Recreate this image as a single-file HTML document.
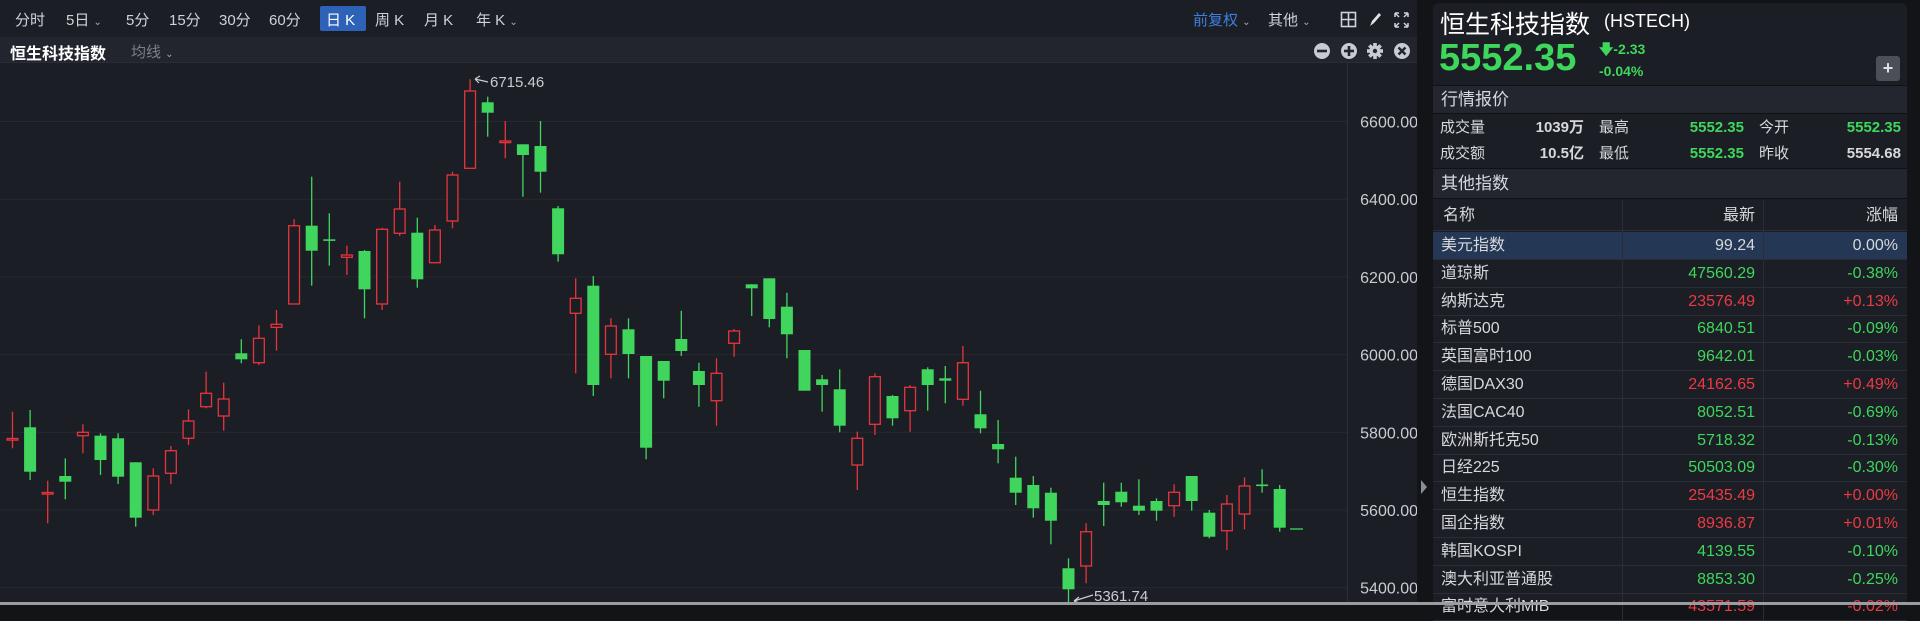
<!DOCTYPE html>
<html><head><meta charset="utf-8">
<style>
*{margin:0;padding:0;box-sizing:border-box}
body{width:1920px;height:605px;background:#121418;font-family:"Liberation Sans","Noto Sans CJK SC",sans-serif;overflow:hidden;position:relative;color:#d6d8dc}
.abs{position:absolute;white-space:nowrap}
#chartp{position:absolute;left:0;top:0;width:1417px;height:602px;background:#1b1e25;border-radius:0 6px 0 0}
#tb{position:absolute;left:0;top:0;width:1417px;height:37px;background:#1b1e25}
#row2{position:absolute;left:0;top:37px;width:1417px;height:26px;background:#22252d;border-bottom:1px solid #2a2d35}
.tbi{position:absolute;top:9px;font-size:15px;color:#cfd2d8}
.car{font-size:10px;color:#aab}
#rp{position:absolute;left:1433px;top:3px;width:474px;height:600px;background:#1b1e25;border-radius:6px 6px 0 0}
.bar{position:absolute;left:0;width:474px;background:#23262e;border-top:1px solid #111;border-bottom:1px solid #111;font-size:17px;color:#d6d8dc;padding-left:8px}
.g{color:#3fd65c}.r{color:#ec3a43}
.trow{position:absolute;left:0;width:474px;height:28px;border-bottom:1px solid #2a2d35;font-size:16px}
.trow span{position:absolute;top:0;line-height:27px;height:27px}
.q span{position:absolute;line-height:20px;height:20px}
</style></head><body>
<div id="chartp"></div>
<div id="tb">
<span class="tbi" style="left:15px">分时</span>
<span class="tbi" style="left:66px">5日 <span class="car">⌄</span></span>
<span class="tbi" style="left:126px">5分</span>
<span class="tbi" style="left:169px">15分</span>
<span class="tbi" style="left:219px">30分</span>
<span class="tbi" style="left:269px">60分</span>
<span class="abs" style="left:320px;top:6px;width:46px;height:25px;background:#2d62b8;border-radius:2px"></span>
<span class="tbi" style="left:326px;color:#fff">日 K</span>
<span class="tbi" style="left:375px">周 K</span>
<span class="tbi" style="left:424px">月 K</span>
<span class="tbi" style="left:476px">年 K <span class="car">⌄</span></span>
<span class="tbi" style="left:1193px;color:#3d7fe0">前复权 <span class="car">⌄</span></span>
<span class="tbi" style="left:1268px">其他 <span class="car">⌄</span></span>
<svg class="abs" style="left:1340px;top:11px" width="72" height="18" viewBox="0 0 72 18">
<rect x="1.5" y="1.5" width="14" height="14" fill="none" stroke="#cfd2d8" stroke-width="1.6"/><path d="M8.5 1.5v14M1.5 8.5h14" stroke="#cfd2d8" stroke-width="1.6"/>
<path d="M30 15l2-5 7-8 2 2-7 8z" fill="#e0e2e6"/>
<path d="M55 2h4M55 2v4M55 2l4 4M68 2h-4M68 2v4M68 2l-4 4M55 16h4M55 16v-4M55 16l4-4M68 16h-4M68 16v-4M68 16l-4-4" stroke="#cfd2d8" stroke-width="1.5"/>
</svg>
</div>
<div id="row2">
<span class="abs" style="left:10px;top:3px;font-size:16px;font-weight:bold;color:#fff">恒生科技指数</span>
<span class="abs" style="left:131px;top:4px;font-size:15px;color:#7c808a">均线 <span class="car">⌄</span></span>
<svg class="abs" style="left:1313px;top:5px" width="100" height="18" viewBox="0 0 100 18">
<circle cx="9" cy="9" r="8" fill="#c8cbd0"/><rect x="4" y="7.7" width="10" height="2.6" fill="#22252d"/>
<circle cx="36" cy="9" r="8" fill="#c8cbd0"/><rect x="31" y="7.7" width="10" height="2.6" fill="#22252d"/><rect x="34.7" y="4" width="2.6" height="10" fill="#22252d"/>
<g transform="translate(62,9)" fill="#c8cbd0"><circle r="5.5"/><g id="t"><rect x="-1.8" y="-8" width="3.6" height="16"/></g><use href="#t" transform="rotate(45)"/><use href="#t" transform="rotate(90)"/><use href="#t" transform="rotate(135)"/><circle r="2.2" fill="#22252d"/></g>
<circle cx="89" cy="9" r="8" fill="#c8cbd0"/><path d="M85.5 5.5l7 7M92.5 5.5l-7 7" stroke="#22252d" stroke-width="2.4"/>
</svg>
</div>
<svg id="chart" class="abs" style="left:0;top:63px" width="1417" height="539" viewBox="0 63 1417 539"></svg>
<svg class="abs" style="left:1419px;top:479px" width="10" height="16"><path d="M2 1l6 7-6 7z" fill="#8a8e96"/></svg>

<div id="rp">
<span class="abs" style="left:7px;top:2px;font-size:25px;color:#fff">恒生科技指数</span>
<span class="abs" style="left:171px;top:8px;font-size:18px;color:#fff">(HSTECH)</span>
<span class="abs g" style="left:6px;top:34px;font-size:38px;font-weight:bold">5552.35</span>
<span class="abs g" style="left:166px;top:36px;font-size:14px;font-weight:bold">🡇-2.33</span>
<span class="abs g" style="left:166px;top:60px;font-size:14px;font-weight:bold">-0.04%</span>
<span class="abs" style="left:443px;top:53px;width:24px;height:25px;background:#4a4f58;border-radius:3px;color:#dfe1e5;font-size:18px;font-weight:bold;text-align:center;line-height:25px">+</span>
<div class="bar" style="top:82px;height:29px;line-height:27px">行情报价</div>
<div class="q" style="position:absolute;top:112px;left:0;width:474px;height:54px;font-size:15px">
<span style="left:7px;top:3px">成交量</span><span style="right:323px;top:3px;font-weight:bold">1039万</span>
<span style="left:166px;top:3px">最高</span><span class="g" style="right:163px;top:3px;font-weight:bold">5552.35</span>
<span style="left:326px;top:3px">今开</span><span class="g" style="right:6px;top:3px;font-weight:bold">5552.35</span>
<span style="left:7px;top:29px">成交额</span><span style="right:323px;top:29px;font-weight:bold">10.5亿</span>
<span style="left:166px;top:29px">最低</span><span class="g" style="right:163px;top:29px;font-weight:bold">5552.35</span>
<span style="left:326px;top:29px">昨收</span><span style="right:6px;top:29px;font-weight:bold">5554.68</span>
</div>
<div class="bar" style="top:165px;height:31px;line-height:29px">其他指数</div>
<div id="tbl"></div>
</div>
<div class="abs" style="left:0;top:602px;width:1920px;height:3px;background:#9a9ca0"></div>

<script>
var C=[
[1,'r',411.7,448.3,438.5,440],[2,'g',410,480,427.3,471.7],[3,'r',480.7,523.3,492.5,494],[4,'g',458.3,499.3,476,481.7],
[5,'r',424.3,453.3,432.3,435.7],[6,'g',433.3,475,435.7,460],[7,'g',433.3,484,438.3,476.7],[8,'g',462.3,526.7,462.3,517.7],
[9,'r',468.3,515,476,510],[10,'r',446,484,450.7,473.3],[11,'r',409.3,445,421,438.3],[12,'r',371.7,408.3,393.3,406.7],
[13,'r',382.7,430.7,399,416],[14,'g',339.3,363.3,353.3,359.3],[15,'r',325.3,365,338.3,362.7],[16,'r',310,350.7,324.3,327.3],
[17,'r',219.3,304,225.7,304],[18,'g',176.7,285.7,225.7,250.7],[19,'g',213.3,265.7,239.3,240.7],[20,'r',245.7,275,255,257.3],
[21,'g',250,318.3,251,289.3],[22,'r',227.7,310,229.3,304],[23,'r',181.7,236,209,233.3],[24,'g',217.7,287.7,232.7,279.3],
[25,'r',225,263.3,230,262.7],[26,'r',171.7,228.3,175,221],[27,'r',79.3,168.3,91,168.3],[28,'g',96.7,136.7,102.3,112.7],
[29,'r',121,158.3,141,142.5],[30,'g',144.3,196.7,144.3,155],[31,'g',121,192.7,146,171.7],[32,'g',206,261.7,208.3,254.3],
[33,'r',278.3,373.3,298.3,313.3],[34,'g',276,396,285.7,385],[35,'r',318.3,378.3,326,354.3],[36,'g',318.3,378.3,329.3,354],
[37,'g',356,459.3,356,447.7],[38,'g',361,398.3,361,380.7],[39,'g',310.7,356,339,351],[40,'g',362.7,406.7,371,385],
[41,'r',358.3,425.7,373.3,400.7],[42,'r',329,356.7,331,343.3],[43,'g',284.3,316,284.3,288.3],[44,'g',278.3,327.3,278.3,319],
[45,'g',292.7,358.3,306.7,334.3],[46,'g',350,390.7,350,390.7],[47,'g',375,411.7,379.3,385],[48,'g',369.3,432.3,389.3,425.7],
[49,'r',431.7,490,438.3,465],[50,'r',373.3,435,376.7,424.3],[51,'g',395,425.7,396,418.3],[52,'r',385,431.7,387.3,410.7],
[53,'g',367.3,410.7,369.3,385],[54,'g',366,403.3,378.3,380.7],[55,'r',346,405.7,362.7,399.3],[56,'g',390.7,433.3,414.3,428.3],
[57,'g',420,463.3,444,449.3],[58,'g',456.7,505,477.7,492.7],[59,'g',476,517.7,485,508.3],[60,'g',487.7,544.3,492.7,520.7],
[61,'g',558.3,602,568.3,589.3],[62,'r',523.3,583.3,531.7,566],[63,'g',482.7,526,501,505],[64,'g',482.7,506.7,491.7,502.3],
[65,'g',479.3,515,505.7,510.7],[66,'g',498.3,520.7,501,510.7],[67,'r',484.3,516.7,492.3,505.7],[68,'g',476,510.7,476,501],
[69,'g',510,538.3,512.7,536.7],[70,'r',495,550,504,530.7],[71,'r',477.3,529.3,486,514],[72,'g',469.3,492.7,484.5,486],
[73,'g',485,531.7,489,527.7]];
var s='';
var labels=['6600.00','6400.00','6200.00','6000.00','5800.00','5600.00','5400.00'];
for(var i=0;i<7;i++){var y=121.5+i*77.7;s+='<line x1="0" x2="1347" y1="'+y+'" y2="'+y+'" stroke="#252830" stroke-width="1"/>';
s+='<text x="1418" y="'+(y+6)+'" text-anchor="end" font-size="16" fill="#c9ccd1" font-family="Liberation Sans,sans-serif">'+labels[i]+'</text>';}
s+='<line x1="1347.5" x2="1347.5" y1="63" y2="602" stroke="#2c2f37"/>';
C.forEach(function(c){var x=12.5+(c[0]-1)*17.6;var col=c[1]=='g'?'#40d65d':'#e8343c';
s+='<line x1="'+x+'" x2="'+x+'" y1="'+c[2]+'" y2="'+c[3]+'" stroke="'+col+'" stroke-width="1.3"/>';
var h=Math.max(c[5]-c[4],1.6);
if(c[1]=='g')s+='<rect x="'+(x-6)+'" y="'+c[4]+'" width="12" height="'+h+'" fill="'+col+'"/>';
else s+='<rect x="'+(x-5.4)+'" y="'+c[4]+'" width="10.8" height="'+h+'" fill="#1b1e25" stroke="'+col+'" stroke-width="1.3"/>';});
s+='<line x1="1290" x2="1303" y1="529" y2="529" stroke="#40d65d" stroke-width="1.3"/>';
s+='<path d="M488 82L475 79M475 79l5-3M475 79l4 4" stroke="#c9ccd1" stroke-width="1.2" fill="none"/>';
s+='<text x="490" y="87" font-size="15" fill="#c9ccd1" font-family="Liberation Sans,sans-serif">6715.46</text>';
s+='<path d="M1093 595L1074 601M1074 601l5-4M1074 601l5 2" stroke="#c9ccd1" stroke-width="1.2" fill="none"/>';
s+='<text x="1094" y="601" font-size="15" fill="#c9ccd1" font-family="Liberation Sans,sans-serif">5361.74</text>';
document.getElementById('chart').innerHTML=s;
var R=[['美元指数','99.24','0.00%','w'],['道琼斯','47560.29','-0.38%','g'],['纳斯达克','23576.49','+0.13%','r'],['标普500','6840.51','-0.09%','g'],
['英国富时100','9642.01','-0.03%','g'],['德国DAX30','24162.65','+0.49%','r'],['法国CAC40','8052.51','-0.69%','g'],['欧洲斯托克50','5718.32','-0.13%','g'],
['日经225','50503.09','-0.30%','g'],['恒生指数','25435.49','+0.00%','r'],['国企指数','8936.87','+0.01%','r'],['韩国KOSPI','4139.55','-0.10%','g'],
['澳大利亚普通股','8853.30','-0.25%','g'],['富时意大利MIB','43571.59','-0.02%','r']];
var t='<div class="trow" style="top:197px;height:31px;font-size:16px"><span style="left:10px;line-height:31px">名称</span><span style="right:152px;line-height:31px">最新</span><span style="right:9px;line-height:31px">涨幅</span></div>';
R.forEach(function(r,i){var top=229+i*27.8;var cl=r[3]=='w'?'':r[3];
t+='<div class="trow" style="top:'+top+'px;'+(i==0?'background:#243754;':'')+'"><span style="left:8px">'+r[0]+'</span><span class="'+cl+'" style="right:152px">'+r[1]+'</span><span class="'+cl+'" style="right:9px">'+r[2]+'</span></div>';});
t+='<div style="position:absolute;left:189px;top:197px;width:1px;height:420px;background:#2a2d35"></div><div style="position:absolute;left:330px;top:197px;width:1px;height:420px;background:#2a2d35"></div>';
document.getElementById('tbl').innerHTML=t;
</script>
</body></html>
